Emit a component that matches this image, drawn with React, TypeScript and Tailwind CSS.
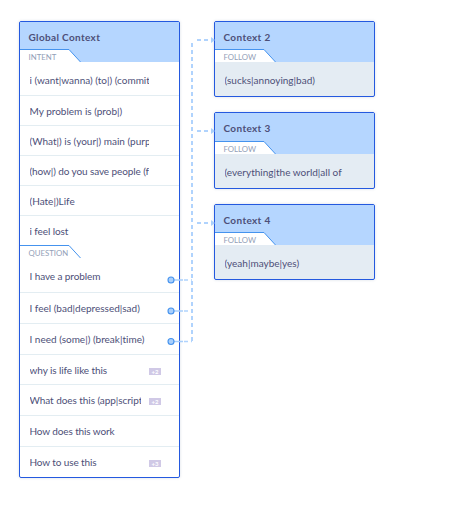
import type { ReactNode } from "react";

type RowData = { text: string; box: string; width?: string; count?: string };

const intents: RowData[] = [
  { text: "i (want|wanna) (to|) (commit", box: "h-[34px] pt-[11px] border-b" },
  { text: "My problem is (prob|)", box: "h-[30px] pt-2 border-b" },
  { text: "(What|) is (your|) main (purp", box: "h-[30px] pt-2 border-b" },
  { text: "(how|) do you save people (f", box: "h-[30px] pt-2 border-b tracking-[-0.1px]" },
  { text: "(Hate|)Life", box: "h-[30px] pt-2 border-b" },
  { text: "i feel lost", box: "h-[29px] pt-2 tracking-[-0.08px]" },
];

const questions: RowData[] = [
  { text: "I have a problem", box: "h-[35px] pt-[11px] border-b tracking-[-0.1px]" },
  { text: "I feel (bad|depressed|sad)", box: "h-[31px] pt-2 border-b" },
  { text: "I need (some|) (break|time)", box: "h-[31px] pt-2 border-b" },
  { text: "why is life like this", box: "h-[30px] pt-2 border-b tracking-[-0.08px]", count: "+2", width: "w-[111.5px]" },
  { text: "What does this (app|script", box: "h-[31px] pt-2 border-b tracking-[-0.06px]", count: "+2", width: "w-[111.5px]" },
  { text: "How does this work", box: "h-[31px] pt-2 border-b tracking-[-0.12px]" },
  { text: "How to use this", box: "h-[30px] pt-2 tracking-[-0.12px]", count: "+3", width: "w-[111.5px]" },
];

function Row({ text, box, width = "w-[119.5px]", count }: RowData) {
  return (
    <div className={`flex items-start border-[#e3edf2] pl-[9.5px] ${box}`}>
      <span className={`block shrink-0 overflow-hidden whitespace-nowrap text-[10px] leading-[14px] ${width}`}>
        {text}
      </span>
      {count && (
        <span className="ml-2 mt-[5px] h-[7px] w-3 bg-[#d0c9e6] text-center text-[6px] font-bold leading-[7px] tracking-normal text-white">
          {count}
        </span>
      )}
    </div>
  );
}

function Tab({ label }: { label: string }) {
  return (
    <div className="relative h-[13px] shrink-0">
      <svg className="absolute left-0 top-0" width="62" height="13" viewBox="0 0 62 13">
        <path d="M0 .5H49L60.5 13H0Z" fill="#fff" />
        <path d="M0 .5H49L60.5 13" fill="none" stroke="#4593ee" />
      </svg>
      <span className="relative block pl-[8.5px] pt-[2px] text-[7.8px] leading-[12px] text-[#93a0b7]">{label}</span>
    </div>
  );
}

function Panel({ title, tab, head = "h-[27px]", className, children }: {
  title: string; tab: string; head?: string; className: string; children: ReactNode;
}) {
  return (
    <section className={`flex w-[161px] flex-col overflow-hidden rounded-[2px] border border-[#2459df] shadow-[0_0_3px_rgba(60,90,140,0.2)] ${className}`}>
      <header className="bg-[#b5d6ff]">
        <h2 className={`pl-[8.5px] pt-2 text-[10px] font-bold leading-[14px] tracking-[0.35px] ${head}`}>{title}</h2>
        <Tab label={tab} />
      </header>
      {children}
    </section>
  );
}

function Connectors() {
  return (
    <svg className="pointer-events-none absolute left-0 top-0" width="453" height="516" viewBox="0 0 453 516">
      <g fill="none" stroke="#b0d3fd" strokeWidth="2" strokeDasharray="4 3">
        <path d="M192 341V40" />
        <path d="M197 40H211M197 131H211M197 223H211" />
        <path d="M184 280H192M184 311H192M184 341.5H192" strokeWidth="1.5" />
      </g>
      <path d="M174 280H183M174 311H183M174 341.5H183" stroke="#a9cffb" strokeWidth="1.5" />
      <path d="M211 37L215 40L211 43ZM211 128L215 131L211 134ZM211 220L215 223L211 226Z" fill="#a9cffb" />
      <g fill="#a9cffb" stroke="#4593ee" strokeWidth="1.1">
        <circle cx="171" cy="280" r="3" />
        <circle cx="171" cy="311" r="3" />
        <circle cx="171" cy="341.5" r="3" />
      </g>
    </svg>
  );
}

export default function App() {
  return (
    <main className="relative flex h-[516px] w-[453px] items-start gap-[34px] overflow-hidden bg-white pl-[19px] pt-[21px] font-['Lato',sans-serif] text-[#4d4f78] [font-variant-ligatures:none]">
      <Panel title="Global Context" tab="INTENT" className="h-[457px] bg-white">
        {intents.map((row) => <Row key={row.text} {...row} />)}
        <Tab label="QUESTION" />
        {questions.map((row) => <Row key={row.text} {...row} />)}
      </Panel>
      <div className="flex flex-col">
        <Panel title="Context 2" tab="FOLLOW" className="h-[76px] bg-[#e4ecf3]">
          <Row text="(sucks|annoying|bad)" box="pt-[11px]" />
        </Panel>
        <Panel title="Context 3" tab="FOLLOW" head="h-[28px]" className="mt-[15px] h-[77px] bg-[#e4ecf3]">
          <Row text="(everything|the world|all of" box="pt-[11px]" />
        </Panel>
        <Panel title="Context 4" tab="FOLLOW" className="mt-[15px] h-[76px] bg-[#e4ecf3]">
          <Row text="(yeah|maybe|yes)" box="pt-[11px]" />
        </Panel>
      </div>
      <Connectors />
    </main>
  );
}
